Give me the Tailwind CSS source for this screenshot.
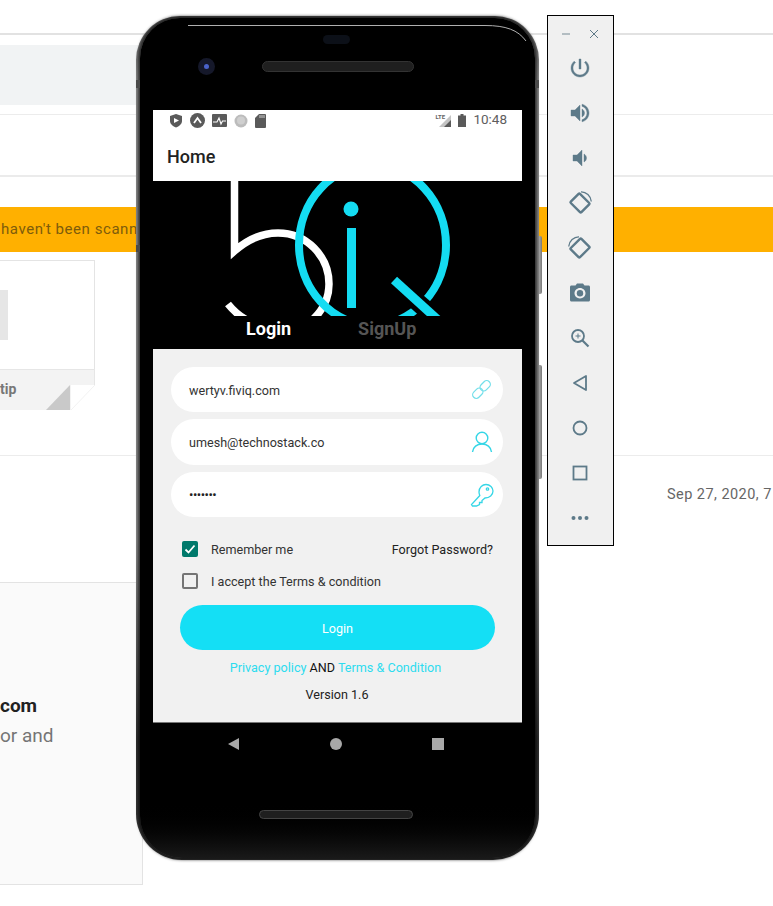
<!DOCTYPE html>
<html>
<head>
<meta charset="utf-8">
<script src="https://cdn.jsdelivr.net/npm/@tailwindcss/browser@4"></script>
</head>
<body class="bg-white">
<div class="relative w-[773px] h-[906px] overflow-hidden bg-white font-['Roboto',sans-serif]">

  <!-- page behind the emulator -->
  <div class="flex flex-col w-full">
    <div class="mt-[33px] h-[2px] bg-[#e2e2e2]"></div>
    <div class="mt-[10px] w-[140px] h-[60px] bg-[#f1f3f4]"></div>
    <div class="mt-[9px] h-px bg-[#ececec]"></div>
    <div class="mt-[60px] h-[2px] bg-[#ebebeb]"></div>
    <div class="mt-[30px] h-[45px] bg-[#ffb000] flex items-center pl-px text-[15px] tracking-[0.55px] text-[#7d5c0c] whitespace-nowrap">haven't been scann</div>
    <div class="mt-[8px] w-[95px] h-[150px] flex flex-col">
      <div class="h-[109px] border-t border-r border-[#e4e4e4] flex items-center">
        <div class="w-2 h-[50px] bg-[#e6e6e6]"></div>
      </div>
      <div class="h-[16px] bg-[#f3f3f3] border-t border-r border-[#e6e6e6]"></div>
      <div class="relative w-[71px] h-[25px] bg-[#f3f3f3] flex items-start">
        <span class="text-[14px] font-bold text-[#777] leading-none -mt-[3px]">tip</span>
        <svg class="absolute left-0 top-0 w-[95px] h-[25px]" viewBox="0 0 95 25"><path d="M46 25 70 0V25Z" fill="#c9c9c9"/><path d="M95 0 71 25" stroke="#f2f2f2" fill="none"/></svg>
      </div>
    </div>
    <div class="mt-[45px] h-px bg-[#ececec]"></div>
    <div class="mt-[30px] h-[17px] pl-[667px] text-[14.5px] leading-[17px] text-[#666] tracking-[0.45px] whitespace-nowrap">Sep 27, 2020, 7</div>
    <div class="mt-[79px] w-[143px] h-[303px] bg-[#fafafa] border-t border-r border-b border-[#e3e3e3] flex flex-col pt-[111px] whitespace-nowrap">
      <div class="text-[19px] leading-[24px] font-bold text-[#212121]">com</div>
      <div class="mt-[6px] text-[19px] leading-[24px] text-[#757575]">or and</div>
    </div>
  </div>

  <!-- emulator window: phone -->
  <div class="absolute left-[136px] top-[16px] w-[407px] h-[844px]">
    <!-- side buttons -->
    <div class="absolute left-[400px] top-[220px] w-[6px] h-[58px] bg-gradient-to-r from-[#555] via-[#aaa] to-[#777] rounded-r-[2px]"></div>
    <div class="absolute left-[400px] top-[349px] w-[6px] h-[114px] bg-gradient-to-r from-[#555] via-[#aaa] to-[#777] rounded-r-[2px]"></div>
    <div class="relative w-[403px] h-[844px] rounded-t-[44px] rounded-b-[46px] bg-[linear-gradient(180deg,#5a5a5a_0%,#8a8a8a_8%,#8a8a8a_62%,#2e2e2e_86%,#3a3a3a_100%)] pt-[2px] px-[4px] pb-[2px]">
      <div class="relative w-full h-full rounded-t-[40px] rounded-b-[42px] shadow-[0_0_3px_2px_rgba(0,0,0,0.65)] bg-gradient-to-b from-[#000] via-[#000] via-[93%] to-[#191919] flex flex-col items-center">
        <svg class="absolute left-0 top-0 w-[395px] h-[40px]" viewBox="0 0 395 40" fill="none"><path d="M48 7.500H345C366 7.500 378 12 386 23" stroke="#b0b0b0" stroke-width="1"/></svg>
        <!-- bezel top -->
        <div class="relative w-[369px] h-[92px] shrink-0">
          <div class="absolute left-[170px] top-[17px] w-[27px] h-[9px] rounded-full bg-[#0c1018]"></div>
          <div class="absolute left-[45px] top-[40px] w-[17px] h-[17px] rounded-full bg-[#15182a] flex items-center justify-center"><div class="w-[5px] h-[5px] rounded-full bg-[#4a62c8]"></div></div>
          <div class="absolute left-[109px] top-[43px] w-[152px] h-[11px] rounded-full bg-[#1f1f1f] border border-[#333]"></div>
        </div>
        <!-- screen -->
        <div class="w-[369px] h-[613px] shrink-0 flex flex-col">
          <div class="h-[21px] bg-white flex items-start pt-[3px] justify-between pl-[16px] pr-[15px]">
            <div class="flex items-center gap-[7px]">
              <svg class="w-[14px] h-[15px]" viewBox="0 0 14 15"><path d="M7 1 13 3V8C13 11 10 13.500 7 14.500 4 13.500 1 11 1 8V3Z" fill="#5a5a5a"/><path d="M5 5 10 7.500 5 10Z" fill="#fff"/></svg>
              <svg class="w-[15px] h-[15px]" viewBox="0 0 15 15"><circle cx="7.500" cy="7.500" r="7.500" fill="#5a5a5a"/><path d="M4 10 7.500 5 11 10" stroke="#fff" stroke-width="1.800" fill="none"/></svg>
              <svg class="w-[15px] h-[13px]" viewBox="0 0 15 13"><rect width="15" height="13" rx="1" fill="#5a5a5a"/><path d="M1 8H5L7 4 9 10 10.500 7H14" stroke="#fff" stroke-width="1.100" fill="none"/></svg>
              <svg class="w-[14px] h-[14px]" viewBox="0 0 14 14"><circle cx="7" cy="7" r="6.500" fill="#bcbcbc"/><circle cx="7" cy="6.500" r="4" fill="#cfcfcf"/></svg>
              <svg class="w-[11px] h-[14px]" viewBox="0 0 11 14"><path d="M4 0H10A1 1 0 0 1 11 1V13A1 1 0 0 1 10 14H1A1 1 0 0 1 0 13V4Z" fill="#5a5a5a"/><path d="M5 1V4M7 1V4M9 1V4" stroke="#fff" stroke-width=".7"/></svg>
            </div>
            <div class="flex items-center h-[14px]">
              <div class="relative w-[17px] h-[13px]">
                <svg class="absolute left-0 top-0 w-[17px] h-[13px]" viewBox="0 0 17 13"><path d="M16 1V13H4Z" fill="#c4c4c4"/><path d="M16 6V13H9Z" fill="#5a5a5a"/></svg>
                <span class="absolute left-0 -top-[1px] text-[6px] leading-[7px] font-bold text-[#666] bg-white/70">LTE</span>
              </div>
              <svg class="ml-[6px] w-[8px] h-[13px]" viewBox="0 0 8 13"><path d="M2.500 0H5.500V1.500H8V13H0V1.500H2.500Z" fill="#5a5a5a"/></svg>
              <span class="ml-[7px] text-[13.5px] leading-none text-[#5e5e5e]">10:48</span>
            </div>
          </div>
          <div class="h-[50px] bg-white flex items-center pl-[14px] text-[18px] font-medium text-[#222]">Home</div>
          <div class="relative h-[168px] bg-black">
            <svg class="block" width="369" height="135" viewBox="153 181 369 135" fill="none">
              <path d="M234.500 181V251C247 240 262 233 278 233A51 51 0 0 1 329 284C329 300 322 312 310 322" stroke="#fff" stroke-width="7.500"/>
              <path d="M228 304C236 314 245 320 255 324" stroke="#fff" stroke-width="7.500"/>
              <ellipse cx="372.500" cy="245" rx="73.500" ry="80" stroke="#14dcf2" stroke-width="8"/>
              <path d="M388 276 440 322" stroke="#000" stroke-width="18"/>
              <path d="M394 280 438 320" stroke="#14dcf2" stroke-width="9"/>
              <path d="M351.500 228V308" stroke="#14dcf2" stroke-width="9"/>
              <circle cx="351" cy="209" r="7.500" fill="#14dcf2"/>
            </svg>
            <div class="flex h-[33px] items-start -mt-[1px] text-[18px] font-bold">
              <span class="ml-[93px] text-white">Login</span>
              <span class="ml-[67px] text-[#555]">SignUp</span>
            </div>
          </div>
          <div class="flex-1 bg-[#f1f1f1] border-b border-[#777] flex flex-col pt-[18px] pl-[18px] pr-[19px] text-[12.6px] leading-[16px]">
            <div class="flex flex-col gap-[7px]">
              <div class="h-[45px] rounded-full bg-white flex items-center justify-between pl-[18px] pr-[10px] text-[#333]">
                <span class="pt-[2px]">wertyv.fiviq.com</span>
                <svg class="w-[23px] h-[23px]" viewBox="0 0 22 22" fill="none" stroke="#74dfea" stroke-width="1.200"><g transform="rotate(-45 11 11)"><rect x="0.500" y="7.500" width="11" height="7" rx="3.500"/><rect x="10.500" y="7.500" width="11" height="7" rx="3.500"/></g></svg>
              </div>
              <div class="h-[46px] rounded-full bg-white flex items-center justify-between pl-[18px] pr-[10px] text-[#333]">
                <span class="pt-[2px]">umesh@technostack.co</span>
                <svg class="w-[22px] h-[22px]" viewBox="0 0 22 22" fill="none" stroke="#35d6e6" stroke-width="1.400"><circle cx="11" cy="7" r="5.800"/><path d="M1.500 21C2 16 6 13 11 13S20 16 20.500 21"/></svg>
              </div>
              <div class="h-[45px] rounded-full bg-white flex items-center justify-between pl-[18px] pr-[9px] text-[#222]">
                <span class="text-[13px] tracking-[-0.5px]">•••••••</span>
                <svg class="w-[24px] h-[24px]" viewBox="0 0 24 24" fill="none" stroke="#35d6e6" stroke-width="1.300"><path d="M9 9C9 4.500 12.500 1.500 16 1.500C20 1.500 23 4.500 23 8C23 12 19.500 15 15 15L12 17.500V19.500H9.500V21.500L6.500 23H2.500L1.500 21.500L9.800 12.500C9.200 11 9 10 9 9Z"/><circle cx="17.500" cy="6" r="1.200"/></svg>
              </div>
            </div>
            <div class="mt-[24px] flex items-center justify-between pl-[11px] pr-[10px] h-[16px] text-[#333]">
              <div class="flex items-center">
                <div class="w-[16px] h-[16px] rounded-[2px] bg-[#00796b] flex items-center justify-center">
                  <svg class="w-[12px] h-[12px]" viewBox="0 0 12 12" fill="none" stroke="#fff" stroke-width="1.800"><path d="M1.500 6.500 4.500 9.500 10.500 2.500"/></svg>
                </div>
                <span class="ml-[13px] pt-[2px]">Remember me</span>
              </div>
              <span class="text-[#222] pt-[2px]">Forgot Password?</span>
            </div>
            <div class="mt-[16px] flex items-center pl-[11px] h-[16px] text-[#333]">
              <div class="w-[16px] h-[16px] rounded-[2px] border-2 border-[#757575]"></div>
              <span class="ml-[13px] pt-[2px]">I accept the Terms &amp; condition</span>
            </div>
            <div class="mt-[16px] ml-[9px] mr-[8px] h-[45px] rounded-full bg-[#14dff5] flex items-center justify-center pt-[2px] text-white">Login</div>
            <div class="mt-[10px] -ml-[3px] text-center text-[#2ddcef]">Privacy policy <span class="text-[#111]">AND</span> Terms &amp; Condition</div>
            <div class="mt-[11px] text-center text-[#222]">Version 1.6</div>
          </div>
        </div>
        <!-- nav bar -->
        <div class="w-[369px] h-[41px] shrink-0 flex items-center justify-center gap-[90px] pr-[6px]">
          <svg class="w-[14px] h-[12px]" viewBox="0 0 14 12"><path d="M2 6 13 0V12Z" fill="#a8a8a8"/></svg>
          <div class="w-[12px] h-[12px] rounded-full bg-[#a8a8a8]"></div>
          <div class="w-[12px] h-[12px] bg-[#a8a8a8]"></div>
        </div>
        <!-- bottom speaker -->
        <div class="mt-[46px] ml-[-3px] w-[154px] h-[9px] rounded-full bg-[#1f1f1f] border border-[#444]"></div>
      </div>
      <!-- antenna bands -->
      <div class="absolute left-0 top-[64px] w-[4px] h-[8px] bg-[#4a4a4a]"></div>
      <div class="absolute left-0 top-[229px] w-[4px] h-[7px] bg-[#4a4a4a]"></div>
      <div class="absolute right-0 top-[64px] w-[4px] h-[8px] bg-[#4a4a4a]"></div>
    </div>
  </div>

  <!-- emulator window: toolbar -->
  <div class="absolute left-[547px] top-[15px] w-[67px] h-[531px] bg-[#f0f0f0] border border-black flex flex-col items-center text-[#5d7a89]">
    <div class="w-full h-[32px] shrink-0 flex items-center justify-center gap-[20px] pt-[3px] -ml-[2px]">
      <svg class="w-[8px] h-[8px]" viewBox="0 0 8 8" stroke="#8a9aa3" stroke-width="1.200"><path d="M0 4H8"/></svg>
      <svg class="w-[8px] h-[8px]" viewBox="0 0 8 8" stroke="#5f7a88" stroke-width="1"><path d="M0 0 8 8M8 0 0 8"/></svg>
    </div>
    <div class="flex flex-col items-center gap-[21px] pt-[8px] -ml-[2px]">
      <svg class="w-[24px] h-[24px]" viewBox="0 0 24 24" fill="currentColor" stroke="currentColor" stroke-width=".4"><path d="M13 3h-2v10h2V3zm4.830 2.170l-1.420 1.420C17.990 7.860 19 9.810 19 12c0 3.870-3.130 7-7 7s-7-3.130-7-7c0-2.190 1.010-4.140 2.580-5.420L6.170 5.170C4.230 6.820 3 9.260 3 12c0 4.970 4.030 9 9 9s9-4.030 9-9c0-2.740-1.230-5.180-3.170-6.830z"/></svg>
      <svg class="w-[24px] h-[24px]" viewBox="0 0 24 24" fill="currentColor" stroke="currentColor" stroke-width=".4"><path d="M3 9v6h4l5 5V4L7 9H3zm13.500 3c0-1.770-1.020-3.290-2.500-4.030v8.050c1.480-.730 2.500-2.250 2.500-4.020zM14 3.230v2.060c2.890.860 5 3.540 5 6.710s-2.110 5.850-5 6.710v2.060c4.010-.910 7-4.490 7-8.770s-2.990-7.860-7-8.770z"/></svg>
      <svg class="w-[24px] h-[24px]" viewBox="0 0 24 24" fill="currentColor" stroke="currentColor" stroke-width=".4"><path d="M18.500 12c0-1.770-1.020-3.290-2.500-4.030v8.050c1.480-.730 2.500-2.250 2.500-4.020zM5 9v6h4l5 5V4L9 9H5z"/></svg>
      <svg class="w-[24px] h-[24px]" viewBox="0 0 24 24" fill="none" stroke="currentColor"><rect x="4.500" y="5.500" width="15" height="13" rx="1" stroke-width="2.400" transform="rotate(45 12 12)"/><path d="M13 .8C18 .6 23 5 23.300 10.500" stroke-width="1.300"/></svg>
      <svg class="w-[24px] h-[24px]" viewBox="0 0 24 24" fill="none" stroke="currentColor"><rect x="4.500" y="5.500" width="15" height="13" rx="1" stroke-width="2.400" transform="rotate(-45 12 12)"/><path d="M11 .8C6 .6 1 5 .7 10.500" stroke-width="1.300"/></svg>
      <svg class="w-[24px] h-[24px]" viewBox="0 0 24 24" fill="currentColor"><path fill-rule="evenodd" d="M9 2.500L7.500 4.500H3.500C2.600 4.500 2 5.100 2 6V19C2 19.900 2.600 20.500 3.500 20.500H20.500C21.400 20.500 22 19.900 22 19V6C22 5.100 21.400 4.500 20.500 4.500H16.500L15 2.500H9ZM12 17.500C9 17.500 6.500 15.200 6.500 12.300S9 7 12 7 17.500 9.400 17.500 12.300 15 17.500 12 17.500Z"/><circle cx="12" cy="12.300" r="3.200"/></svg>
      <svg class="w-[24px] h-[24px]" viewBox="0 0 24 24" fill="none" stroke="currentColor" stroke-width="1.800"><circle cx="10" cy="10" r="6"/><path d="M14.500 14.500 20.500 20.500" stroke-width="2.200"/><path d="M10 7.500V12.500M7.500 10H12.500" stroke-width="1"/></svg>
      <svg class="w-[24px] h-[24px]" viewBox="0 0 24 24" fill="none" stroke="currentColor" stroke-width="1.800"><path d="M18 5V19L6 12Z" stroke-linejoin="round"/></svg>
      <svg class="w-[24px] h-[24px]" viewBox="0 0 24 24" fill="none" stroke="currentColor" stroke-width="1.800"><circle cx="12" cy="12" r="6.500"/></svg>
      <svg class="w-[24px] h-[24px]" viewBox="0 0 24 24" fill="none" stroke="currentColor" stroke-width="1.800"><rect x="5.500" y="5.500" width="13" height="13"/></svg>
      <svg class="w-[24px] h-[24px]" viewBox="0 0 24 24" fill="currentColor"><circle cx="5.500" cy="12" r="2"/><circle cx="12" cy="12" r="2"/><circle cx="18.500" cy="12" r="2"/></svg>
    </div>
  </div>
</div>
</body>
</html>
